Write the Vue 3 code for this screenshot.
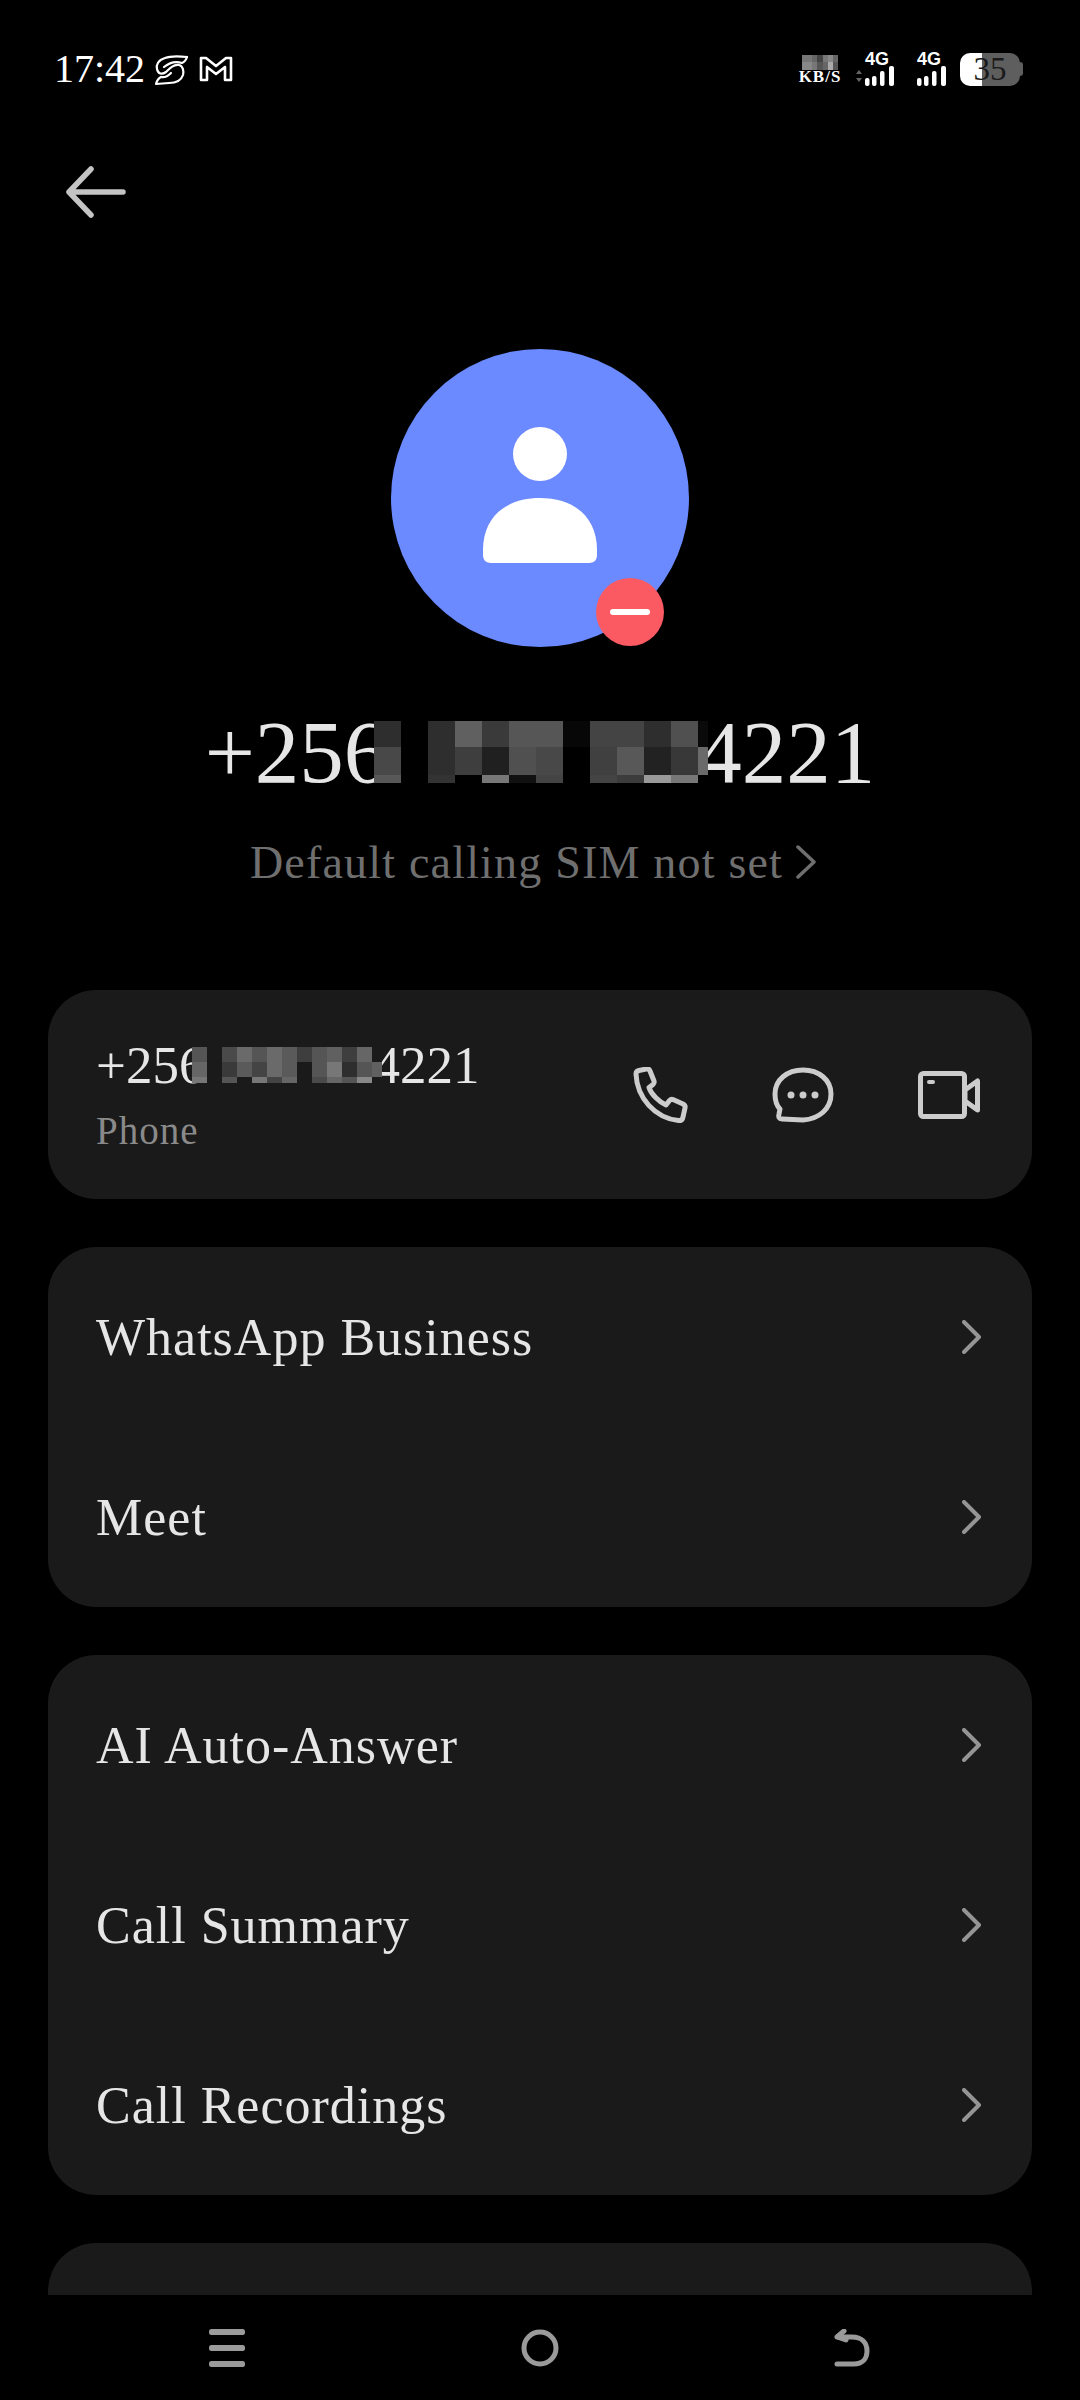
<script setup>
const bigTiles = [
  '#2e2e2e', '#000', '#2e2e2e', '#606060', '#3a3a3a', '#565656', '#565656', '#070707', '#444', '#444', '#2e2e2e', '#505050', '#0a0a0a',
  '#484848', '#000', '#2e2e2e', '#3e3e3e', '#202020', '#505050', '#484848', '#000', '#404040', '#585858', '#222', '#383838', '#6a6a6a',
  '#585858', '#000', '#333', '#000', '#777', '#111', '#444', '#000', '#444', '#3c3c3c', '#999', '#777', '#000'
]
const smallTiles = [
  '#555', '#1a1a1a', '#4a4a4a', '#6a6a6a', '#555', '#6a6a6a', '#5a5a5a', '#3e3e3e', '#555', '#606060', '#3e3e3e', '#666', '#1a1a1a',
  '#666', '#1a1a1a', '#3a3a3a', '#5a5a5a', '#444', '#6a6a6a', '#5a5a5a', '#1a1a1a', '#555', '#777', '#2e2e2e', '#555', '#606060',
  '#777', '#1a1a1a', '#555', '#1a1a1a', '#777', '#444', '#666', '#1a1a1a', '#4a4a4a', '#666', '#555', '#888', '#1a1a1a'
]
const speedTiles = ['#777', '#777', '#666', '#444', '#777', '#888', '#666', '#888', '#888', '#777', '#555', '#666', '#aaa', '#555']

const groups = [
  ['WhatsApp Business', 'Meet'],
  ['AI Auto-Answer', 'Call Summary', 'Call Recordings']
]
</script>

<template>
  <div class="page">
    <div class="scroll">
      <div class="status">
        <span class="time">17:42</span>
        <svg class="logo-s" width="40" height="36" viewBox="0 0 40 36" fill="none" stroke="#fff" stroke-width="2.200" stroke-linecap="round" stroke-linejoin="round">
          <path d="M37 6C28 5 20 5 15 7C8 9 6 14 7 18C8 23 12 24 16 21C20 17 24 13 29 14C33 15 34 20 33 24C31 30 25 32 19 32L6 33C7 29 9 27 11 26"/>
          <path d="M37 6C36 9 35 11 32 12C26 10 20 11 14 16"/>
          <path d="M11 26C15 27 18 25 21 22"/>
        </svg>
        <svg class="logo-m" width="34" height="26" viewBox="0 0 34 26" fill="none" stroke="#fff" stroke-width="2.600" stroke-linejoin="round">
          <path d="M2 2H7L17 10L27 2H32V24H26V11L17 18L8 11V24H2Z"/>
        </svg>
        <div class="status-right">
          <div class="speed">
            <div class="speed-tiles">
              <i v-for="(c, i) in speedTiles" :key="i" :style="{ background: c }"></i>
            </div>
            <span>KB/S</span>
          </div>
          <div class="net first">
            <span>4G</span>
            <svg width="42" height="20" viewBox="0 0 42 20" fill="#fff">
              <path d="M2 8L5 4L8 8ZM2 12H8L5 16Z" fill="#666"/>
              <rect x="11" y="12" width="4.500" height="8" rx="2"/>
              <rect x="18" y="10" width="4.500" height="10" rx="2"/>
              <rect x="26" y="5" width="4.500" height="15" rx="2"/>
              <rect x="35" y="0" width="5" height="20" rx="2"/>
            </svg>
          </div>
          <div class="net">
            <span>4G</span>
            <svg width="30" height="20" viewBox="0 0 30 20" fill="#fff">
              <rect x="0" y="12" width="4.500" height="8" rx="2"/>
              <rect x="7" y="10" width="4.500" height="10" rx="2"/>
              <rect x="15" y="5" width="4.500" height="15" rx="2"/>
              <rect x="24" y="0" width="5" height="20" rx="2"/>
            </svg>
          </div>
          <div class="battery">
            <div class="battery-body"><span>35</span></div>
            <i class="battery-nub"></i>
          </div>
        </div>
      </div>

      <div class="topbar">
        <svg width="60" height="52" viewBox="0 0 60 52" fill="none" stroke="#c4c4c4" stroke-width="5.500" stroke-linecap="round" stroke-linejoin="round">
          <path d="M25 3L3 26L25 49M3 26H57"/>
        </svg>
      </div>

      <div class="hero">
        <div class="avatar">
          <svg width="298" height="298" viewBox="0 0 298 298">
            <circle cx="149" cy="105" r="27" fill="#fff"/>
            <path d="M92 201C92 168 115 149 149 149C183 149 206 168 206 201V206C206 211 203 214 198 214H100C95 214 92 211 92 206Z" fill="#fff"/>
          </svg>
          <div class="badge"><i></i></div>
        </div>
        <div class="big-number">
          <span>+256</span>
          <div class="tiles big-tiles">
            <i v-for="(c, i) in bigTiles" :key="i" :style="{ background: c }"></i>
          </div>
          <span>4221</span>
        </div>
        <div class="sim">
          <span>Default calling SIM not set</span>
          <svg width="20" height="34" viewBox="0 0 20 34" fill="none" stroke="#6f6f6f" stroke-width="3.500" stroke-linecap="round" stroke-linejoin="round">
            <path d="M2 2L18 17L2 32"/>
          </svg>
        </div>
      </div>

      <div class="card phone-card">
        <div class="phone-info">
          <div class="small-number">
            <span>+256</span>
            <div class="tiles small-tiles">
              <i v-for="(c, i) in smallTiles" :key="i" :style="{ background: c }"></i>
            </div>
            <span>4221</span>
          </div>
          <div class="phone-label">Phone</div>
        </div>
        <div class="actions">
          <svg width="56" height="56" viewBox="0 0 56 56" fill="none" stroke="#ccc" stroke-width="5" stroke-linejoin="round">
            <path d="M4 7C4 5 5 4 7 3.500L14 2C16 1.600 17.500 2.500 18 4L22 14C22.500 15.500 22 16.500 21 17.500L17 20.500C19 27 27 35 34 38L37.500 33.500C38.500 32.500 39.500 32 41 32.500L51 37C53 38 53.500 39 53 41L51 50C50.500 52.500 49 54 46.500 53.500C23 51 5 31 4 7Z"/>
          </svg>
          <svg width="62" height="56" viewBox="0 0 62 56" fill="none" stroke="#ccc" stroke-width="5" stroke-linejoin="round">
            <path d="M31 3C47 3 59 13 59 27C59 42 47 52 31 53L10 52C7 52 6 50 7 47L8 42C4 38 3 33 3 27C3 13 15 3 31 3Z"/>
            <circle cx="19" cy="28" r="3.500" fill="#ccc" stroke="none"/>
            <circle cx="31" cy="28" r="3.500" fill="#ccc" stroke="none"/>
            <circle cx="43" cy="28" r="3.500" fill="#ccc" stroke="none"/>
          </svg>
          <svg width="62" height="48" viewBox="0 0 62 48" fill="none" stroke="#ccc" stroke-width="5" stroke-linejoin="round">
            <rect x="2.500" y="2.500" width="44" height="43" rx="3"/>
            <path d="M47 19L59.500 10V39L47 30Z"/>
            <rect x="9" y="9" width="8" height="4" rx="2" fill="#ccc" stroke="none"/>
          </svg>
        </div>
      </div>

      <div v-for="(rows, g) in groups" :key="g" class="card">
        <div v-for="row in rows" :key="row" class="row">
          <span>{{ row }}</span>
          <svg class="chev" width="20" height="34" viewBox="0 0 20 34" fill="none" stroke="#959595" stroke-width="4" stroke-linecap="round" stroke-linejoin="round">
            <path d="M2 2L17 17L2 32"/>
          </svg>
        </div>
      </div>

      <div class="card">
        <div class="row"></div>
      </div>
    </div>

    <div class="nav">
      <svg width="36" height="38" viewBox="0 0 36 38" fill="#9a9a9a">
        <rect x="0" y="0" width="36" height="6" rx="2.500"/>
        <rect x="0" y="16" width="36" height="6" rx="2.500"/>
        <rect x="0" y="32" width="36" height="6" rx="2.500"/>
      </svg>
      <svg width="38" height="38" viewBox="0 0 38 38" fill="none" stroke="#9a9a9a" stroke-width="5">
        <circle cx="19" cy="19" r="16"/>
      </svg>
      <svg width="36" height="38" viewBox="0 0 36 38" fill="none" stroke="#9a9a9a" stroke-width="5" stroke-linecap="round" stroke-linejoin="round">
        <path d="M10 2L3 8L12 11"/>
        <path d="M4 8H18C28 8 33 14 33 22C33 30 28 35 20 35H3"/>
      </svg>
    </div>
  </div>
</template>

<style>
html, body {
  margin: 0;
  background: #000;
}
</style>

<style scoped>
.page {
  width: 1080px;
  height: 2400px;
  background: #000;
  display: flex;
  flex-direction: column;
  font-family: "Liberation Serif", serif;
  overflow: hidden;
}
.scroll {
  flex: 1;
  min-height: 0;
  overflow: hidden;
}
.status {
  height: 70px;
  padding: 34px 57px 0 54px;
  display: flex;
  align-items: center;
  color: #fff;
}
.time {
  font-size: 40px;
  line-height: 40px;
  margin-right: 5px;
}
.logo-m {
  margin-left: 9px;
}
.status-right {
  margin-left: auto;
  display: flex;
  align-items: center;
}
.speed {
  width: 44px;
  display: flex;
  flex-direction: column;
  align-items: center;
}
.speed span {
  font-size: 17px;
  line-height: 14px;
  font-weight: bold;
  letter-spacing: 1px;
}
.speed-tiles {
  width: 37px;
  height: 15px;
  display: grid;
  grid-template-columns: repeat(7, 1fr);
  grid-template-rows: repeat(2, 1fr);
}
.net {
  width: 30px;
  margin-left: 21px;
  display: flex;
  flex-direction: column;
  align-items: flex-end;
  font-family: "Liberation Sans", sans-serif;
  font-size: 18px;
  line-height: 14px;
  font-weight: bold;
}
.net.first {
  width: 42px;
  margin-left: 12px;
}
.net span {
  align-self: flex-start;
}
.net.first span {
  margin-left: 11px;
}
.battery {
  margin-left: 13px;
  display: flex;
  align-items: center;
}
.battery-body {
  width: 60px;
  height: 33px;
  border-radius: 10px;
  background: linear-gradient(90deg, #fff 37%, #5e5e5e 37%);
  color: #1a1a1a;
  font-size: 33px;
  line-height: 33px;
  text-align: center;
}
.battery-nub {
  width: 3px;
  height: 14px;
  background: #5e5e5e;
  border-radius: 0 3px 3px 0;
}
.topbar {
  height: 108px;
  padding: 68px 0 0 66px;
  box-sizing: border-box;
  display: flex;
  align-items: center;
}
.hero {
  margin-top: 137px;
  display: flex;
  flex-direction: column;
  align-items: center;
}
.avatar {
  position: relative;
  width: 298px;
  height: 298px;
  border-radius: 50%;
  background: #6b8aff;
}
.avatar svg {
  display: block;
}
.badge {
  position: absolute;
  left: 205px;
  top: 229px;
  width: 68px;
  height: 68px;
  border-radius: 50%;
  background: #fb5a63;
  display: flex;
  align-items: center;
  justify-content: center;
}
.badge i {
  width: 40px;
  height: 6px;
  border-radius: 3px;
  background: #fff;
}
.big-number {
  margin-top: 55px;
  height: 100px;
  display: flex;
  align-items: center;
  color: #e6e6e6;
  font-size: 89px;
  line-height: 100px;
}
.tiles {
  position: relative;
  z-index: 1;
  display: grid;
  flex: none;
}
.big-tiles {
  margin: 0 -11px 0 -14px;
  grid-template-columns: repeat(12, 27px) 10px;
  grid-template-rows: 26px 28px 8px;
}
.sim {
  margin-top: 30px;
  height: 60px;
  padding-right: 14px;
  display: flex;
  align-items: center;
  gap: 13px;
  color: #6f6f6f;
  font-size: 46px;
  letter-spacing: 1.200px;
}
.card {
  margin: 48px 48px 0;
  background: #1a1a1a;
  border-radius: 48px;
  overflow: hidden;
}
.phone-card {
  margin-top: 98px;
  height: 209px;
  padding: 0 52px 0 48px;
  display: flex;
  align-items: center;
  justify-content: space-between;
}
.small-number {
  display: flex;
  align-items: center;
  height: 60px;
  color: #e6e6e6;
  font-size: 53px;
  line-height: 60px;
}
.small-tiles {
  margin: 0 -9px 0 -13px;
  grid-template-columns: repeat(12, 15px) 10px;
  grid-template-rows: 15px 15px 6px;
}
.phone-label {
  margin-top: 13px;
  color: #8a8a8a;
  font-size: 39px;
  line-height: 46px;
  letter-spacing: 1px;
}
.actions {
  display: flex;
  align-items: center;
  gap: 84px;
}
.row {
  height: 180px;
  padding: 0 48px;
  display: flex;
  align-items: center;
  justify-content: space-between;
  color: #e6e6e6;
  font-size: 52px;
  letter-spacing: 1px;
}
.chev {
  margin-right: 2px;
}
.nav {
  height: 105px;
  flex: none;
  box-sizing: border-box;
  display: flex;
  align-items: center;
  justify-content: space-between;
  padding-left: 209px;
  padding-right: 210px;
  background: #000;
}
</style>
